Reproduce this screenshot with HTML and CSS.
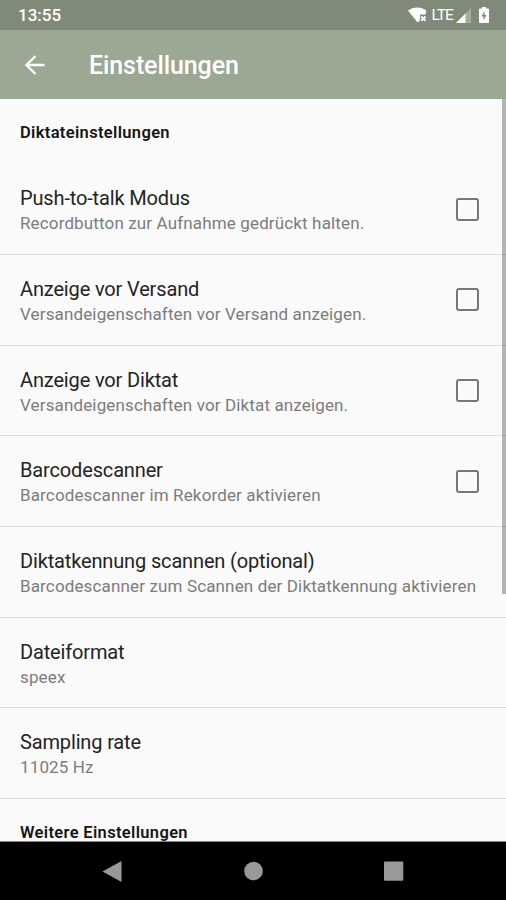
FILE: index.html
```html
<!DOCTYPE html>
<html lang="de">
<head>
<meta charset="utf-8">
<title>Einstellungen</title>
<link rel="stylesheet" href="styles.css">
</head>
<body>
<div class="phone">
  <header class="status">
    <span class="clock">13:55</span>
    <svg class="wifi" viewBox="0 0 19 16"><path d="M0 3.700C5.300-.7 13-.7 18.400 3.700L17.500 7.500H12v5.500L9.700 15.500Z"/><path class="cross" d="M13.200 9.500l4.300 4.300m0-4.300l-4.300 4.300"/></svg>
    <span class="lte">LTE</span>
    <svg class="signal" viewBox="0 0 15 15"><path class="dim" d="M0 15L15 0v15z"/><path d="M0 15L9.500 5.500v9.500z"/></svg>
    <svg class="battery" viewBox="0 0 10 16"><path fill-rule="evenodd" d="M3 0h4v1.500h2q1 0 1 1V15q0 1-1 1H1q-1 0-1-1V2.500q0-1 1-1h2zM5.500 4L2.500 9.500h2V13.500L7.500 8H5.500z"/></svg>
  </header>
  <div class="toolbar">
    <svg class="back" viewBox="0 0 20 20"><path d="M19.500 10H1.500M10.500 1L1.500 10L10.500 19"/></svg>
    <h1>Einstellungen</h1>
  </div>
  <main class="content">
    <h2 class="section">Diktateinstellungen</h2>
    <div class="row"><div class="text"><div class="title">Push-to-talk Modus</div><div class="sub">Recordbutton zur Aufnahme gedrückt halten.</div></div><i class="check"></i></div>
    <div class="row"><div class="text"><div class="title">Anzeige vor Versand</div><div class="sub">Versandeigenschaften vor Versand anzeigen.</div></div><i class="check"></i></div>
    <div class="row"><div class="text"><div class="title">Anzeige vor Diktat</div><div class="sub">Versandeigenschaften vor Diktat anzeigen.</div></div><i class="check"></i></div>
    <div class="row"><div class="text"><div class="title">Barcodescanner</div><div class="sub">Barcodescanner im Rekorder aktivieren</div></div><i class="check"></i></div>
    <div class="row"><div class="text"><div class="title">Diktatkennung scannen (optional)</div><div class="sub">Barcodescanner zum Scannen der Diktatkennung aktivieren</div></div></div>
    <div class="row"><div class="text"><div class="title">Dateiformat</div><div class="sub">speex</div></div></div>
    <div class="row"><div class="text"><div class="title">Sampling rate</div><div class="sub">11025 Hz</div></div></div>
    <h2 class="section">Weitere Einstellungen</h2>
    <i class="scrollbar"></i>
  </main>
  <nav class="nav">
    <svg viewBox="0 0 20 20"><path d="M.5 10.500L19.500 0v21z"/></svg>
    <svg viewBox="0 0 20 20"><circle cx="10.500" cy="10" r="9.300"/></svg>
    <svg viewBox="0 0 20 20"><rect y=".5" width="19.300" height="19.300" rx="1"/></svg>
  </nav>
</div>
</body>
</html>
```
FILE: styles.css
```css
* { box-sizing: border-box; }
body { margin: 0; font-family: Roboto, sans-serif; background: #fafafa; }
svg { display: block; flex: none; overflow: visible; }
.phone { width: 506px; height: 900px; display: flex; flex-direction: column; overflow: hidden; }
.status { height: 30px; flex: none; background: #7f8a78; color: #fff; display: flex; align-items: center; padding: 0 17px 0 18px; }
.status svg { fill: #fff; }
.clock { font-size: 17px; font-weight: 500; margin-right: auto; }
.wifi { width: 19px; height: 16px; }
.cross { stroke: #fff; stroke-width: 1.8; }
.lte { font-size: 15.500px; margin: 0 3px 0 4px; letter-spacing: -.9px; }
.signal { width: 15px; height: 15px; margin-right: 8px; }
.dim { opacity: .3; }
.battery { width: 10px; height: 16px; }
.toolbar { height: 69px; flex: none; background: #9ba893; display: flex; align-items: center; padding-left: 25px; color: #fff; }
.back { width: 20px; height: 20px; fill: none; stroke: #fff; stroke-width: 2.4; }
h1 { margin: 2px 0 0 44px; font-size: 25px; font-weight: 500; letter-spacing: -.1px; }
.content { height: 743px; flex: none; overflow: hidden; position: relative; background: #fafafa; border-bottom: 1px solid #858787; }
.section { margin: 0; height: 65.300px; padding: 24px 20px 0; font-size: 16.500px; line-height: 20px; font-weight: 600; letter-spacing: .34px; color: #151515; }
.row { height: 90.700px; display: flex; align-items: center; padding: 0 27px 0 20px; border-bottom: 1.500px solid #dedede; }
.text { flex: 1; white-space: nowrap; padding-top: 2px; }
.title { font-size: 20px; line-height: 26px; letter-spacing: -.15px; color: #242424; }
.sub { font-size: 17px; line-height: 24px; letter-spacing: .14px; color: #7c7c7c; }
.check { width: 23px; height: 23px; border: 2px solid #777; border-radius: 3px; }
.scrollbar { position: absolute; right: 0; top: 0; width: 4px; height: 495px; background: rgba(0, 0, 0, .28); }
.nav { height: 58px; flex: none; background: #000; display: flex; justify-content: space-between; padding: 19px 102px 0; }
.nav svg { width: 20px; height: 20px; fill: #999; }
```
